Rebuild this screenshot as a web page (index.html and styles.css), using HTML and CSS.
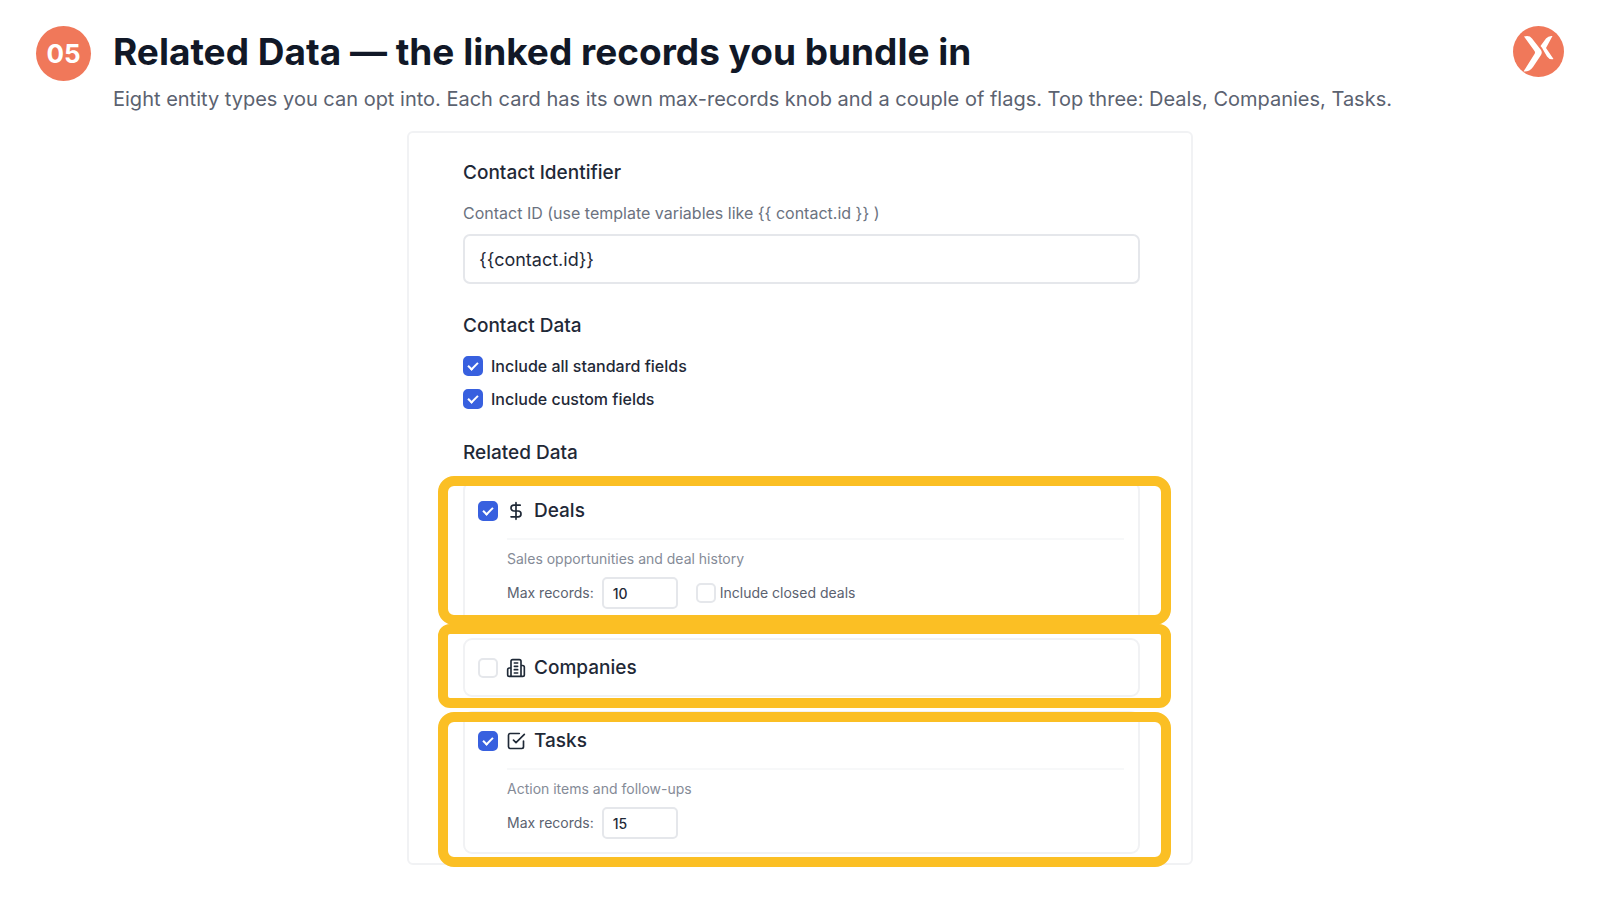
FILE: index.html
```html
<!DOCTYPE html>
<html lang="en">
<head>
    <meta charset="UTF-8">
    <meta name="viewport" content="width=device-width, initial-scale=1.0">
    <title>Related Data</title>
    <link rel="stylesheet" href="styles.css">
</head>
<body>
    <header class="slide-header">
        <div class="step">05</div>
        <div class="heading">
            <h1>Related Data — the linked records you bundle in</h1>
            <p>Eight entity types you can opt into. Each card has its own max-records knob and a couple of flags. Top three: Deals, Companies, Tasks.</p>
        </div>
        <svg class="logo" viewBox="0 0 51 51" aria-hidden="true">
            <circle cx="25.5" cy="25.5" r="25.5" fill="#f0785a"/>
            <path d="M11 10.500Q16.500 9 19 12.500L28 24Q29.500 26.500 28 29L20 41Q16.500 46 10.500 45.500L21.500 28Q22.500 26.500 21.500 25Z" fill="#fff"/>
            <path d="M39.500 10Q35.500 9.500 33 12.500L27.500 20Q29.500 22 30.500 24.500L34 30.500Q36.500 34 40.500 33L33 22Z" fill="#fff"/>
        </svg>
    </header>

    <main class="panel">
        <section>
            <h2>Contact Identifier</h2>
            <label class="hint" for="contactId">Contact ID (use template variables like {{ contact.id }} )</label>
            <input class="text-input" type="text" id="contactId" value="{{contact.id}}">
        </section>

        <section>
            <h2>Contact Data</h2>
            <label class="option"><input type="checkbox" checked> Include all standard fields</label>
            <label class="option"><input type="checkbox" checked> Include custom fields</label>
        </section>

        <section>
            <h2>Related Data</h2>
            <div class="cards">
                <!-- Deals -->
                <div class="card deals">
                    <label class="card-title">
                        <input type="checkbox" checked>
                        <svg class="icon" viewBox="0 0 24 24"><path d="M12 2v20M17 5H9.500a3.500 3.500 0 0 0 0 7h5a3.500 3.500 0 0 1 0 7H6"/></svg>
                        Deals
                    </label>
                    <div class="card-body">
                        <p>Sales opportunities and deal history</p>
                        <div class="settings">
                            <label for="dealsMax">Max records:</label>
                            <input class="number-input" type="text" id="dealsMax" value="10">
                            <label class="flag"><input type="checkbox"> Include closed deals</label>
                        </div>
                    </div>
                </div>

                <!-- Companies -->
                <div class="card companies">
                    <label class="card-title">
                        <input type="checkbox">
                        <svg class="icon" viewBox="0 0 24 24"><path d="M6 22V4a2 2 0 0 1 2-2h8a2 2 0 0 1 2 2v18ZM6 12H4a2 2 0 0 0-2 2v6a2 2 0 0 0 2 2h2M18 9h2a2 2 0 0 1 2 2v9a2 2 0 0 1-2 2h-2M10 6h4M10 10h4M10 14h4M10 18h4"/></svg>
                        Companies
                    </label>
                </div>

                <!-- Tasks -->
                <div class="card tasks">
                    <label class="card-title">
                        <input type="checkbox" checked>
                        <svg class="icon" viewBox="0 0 24 24"><path d="M9 11l3 3L22 4M21 12v7a2 2 0 0 1-2 2H5a2 2 0 0 1-2-2V5a2 2 0 0 1 2-2h11"/></svg>
                        Tasks
                    </label>
                    <div class="card-body">
                        <p>Action items and follow-ups</p>
                        <div class="settings">
                            <label for="tasksMax">Max records:</label>
                            <input class="number-input" type="text" id="tasksMax" value="15">
                        </div>
                    </div>
                </div>
            </div>
        </section>
    </main>
</body>
</html>
```
FILE: styles.css
```css
* {
    box-sizing: border-box;
}

body {
    margin: 0;
    padding-bottom: 32px;
    background-color: #fff;
    color: #1f2937;
    font-family: Inter, "Liberation Sans", sans-serif;
}

h1, h2, p {
    margin: 0;
}

.slide-header {
    display: flex;
    align-items: flex-start;
    padding: 26px 36px 0;
}

.step {
    flex: none;
    width: 55px;
    height: 55px;
    margin-right: 22px;
    border-radius: 50%;
    background-color: #f0785a;
    color: #fff;
    font-size: 26px;
    font-weight: 700;
    line-height: 55px;
    text-align: center;
}

.heading {
    flex: 1;
}

.heading h1 {
    color: #111827;
    font-size: 37px;
    font-weight: 700;
    line-height: 52px;
}

.heading p {
    margin-top: 6px;
    color: #5b6270;
    font-size: 20px;
    line-height: 30px;
}

.logo {
    flex: none;
    width: 51px;
    height: 51px;
}

.panel {
    max-width: 786px;
    margin: 17px auto 0;
    padding: 26px 51px 9px 54px;
    border: 2px solid #f1f2f4;
    border-radius: 6px;
}

.panel section {
    margin-bottom: 28px;
}

.panel section:last-child {
    margin-bottom: 0;
}

.panel h2 {
    margin-bottom: 14px;
    font-size: 19px;
    font-weight: 500;
    line-height: 28px;
}

.hint {
    display: block;
    margin-bottom: 9px;
    color: #6b7280;
    font-size: 16px;
    line-height: 24px;
}

.text-input,
.number-input {
    border: 2px solid #e5e7eb;
    border-radius: 7px;
    background-color: #fff;
    color: #1f2937;
    font-family: inherit;
}

.text-input {
    display: block;
    width: 100%;
    height: 50px;
    padding: 0 14px;
    font-size: 18px;
}

input[type="checkbox"] {
    flex: none;
    display: grid;
    place-items: center;
    appearance: none;
    width: 20px;
    height: 20px;
    margin: 0;
    border: 2px solid #e5e7eb;
    border-radius: 5px;
    background-color: #fff;
}

input[type="checkbox"]:checked {
    border-color: #3860df;
    background-color: #3860df;
}

/* tick */
input[type="checkbox"]:checked::after {
    content: "";
    width: 8px;
    height: 4px;
    margin-bottom: 3px;
    border-left: 2px solid #fff;
    border-bottom: 2px solid #fff;
    box-sizing: content-box;
    transform: rotate(-45deg);
}

.option {
    display: flex;
    align-items: center;
    gap: 8px;
    margin-bottom: 9px;
    font-size: 16px;
    font-weight: 500;
    line-height: 24px;
}

.cards {
    display: flex;
    flex-direction: column;
    gap: 14px;
}

.card {
    position: relative;
    padding: 14px 14px 13px 13px;
    border: 2px solid #f1f2f4;
    border-radius: 9px;
}

.card-title {
    display: flex;
    align-items: center;
    gap: 8px;
    font-size: 19px;
    font-weight: 500;
    line-height: 28px;
}

.icon {
    width: 20px;
    height: 20px;
    fill: none;
    stroke: currentColor;
    stroke-width: 2;
    stroke-linecap: round;
    stroke-linejoin: round;
}

.card-body {
    margin: 13px 0 0 29px;
    padding-top: 9px;
    border-top: 2px solid #f7f8f9;
    color: #5b6270;
    font-size: 14px;
    line-height: 20px;
}

.card-body p {
    color: #858b97;
}

.settings {
    display: flex;
    align-items: center;
    margin-top: 8px;
}

.number-input {
    width: 76px;
    height: 32px;
    margin: 0 18px 0 8px;
    padding: 0 9px;
    border-radius: 5px;
    font-size: 14px;
    font-weight: 500;
}

.flag {
    display: flex;
    align-items: center;
    gap: 4px;
}

/* Highlight frames drawn over the cards */
.card::after {
    content: "";
    position: absolute;
    left: -27px;
    right: -33px;
    border: 10px solid #fbbf24;
    border-radius: 16px;
    pointer-events: none;
}

.deals::after {
    top: -7px;
    bottom: -3px;
}

.companies::after {
    top: -16px;
    bottom: -13px;
    border-radius: 12px;
}

.tasks::after {
    top: -1px;
    bottom: -15px;
}
```
